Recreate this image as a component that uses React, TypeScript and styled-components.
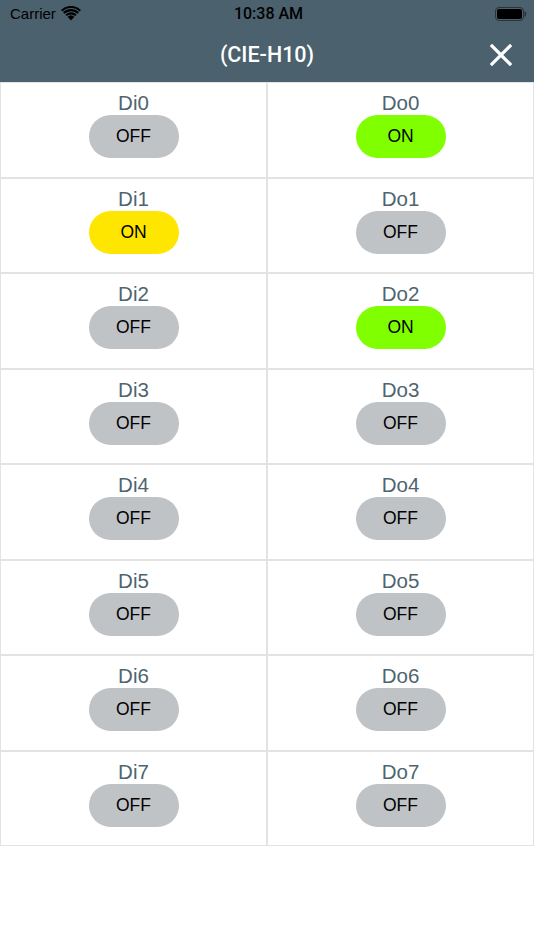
import React from "react";
import styled, { createGlobalStyle } from "styled-components";

const GlobalStyle = createGlobalStyle`
  html, body {
    margin: 0;
    padding: 0;
    background: #ffffff;
    font-family: "Liberation Sans", Arial, sans-serif;
  }
  * {
    box-sizing: border-box;
  }
`;

const Page = styled.div`
  width: 534px;
  min-height: 950px;
  background: #ffffff;
`;

const Header = styled.div`
  background-color: #4b616d;
  color: #ffffff;
`;

const StatusBar = styled.div`
  display: grid;
  grid-template-columns: 1fr auto 1fr;
  align-items: center;
  height: 27px;
  padding: 0 7px 0 10px;
  font-size: 15px;
  color: #000000;
`;

const Carrier = styled.div`
  display: flex;
  align-items: center;
  gap: 5px;
`;

const Clock = styled.div`
  font-family: Roboto, "Liberation Sans", sans-serif;
  font-size: 16px;
  font-weight: 500;
`;

const Battery = styled.div`
  justify-self: end;
  display: flex;
  align-items: center;
`;

const NavBar = styled.div`
  position: relative;
  display: flex;
  align-items: center;
  justify-content: center;
  height: 55px;
`;

const Title = styled.div`
  font-family: Roboto, "Liberation Sans", sans-serif;
  font-size: 21.5px;
  font-weight: 500;
  margin-top: -1px;
`;

const CloseButton = styled.button`
  position: absolute;
  right: 20px;
  top: 15px;
  width: 26px;
  height: 26px;
  padding: 0;
  border: none;
  background: transparent;
  display: flex;
  align-items: center;
  justify-content: center;
`;

const Grid = styled.div`
  display: grid;
  grid-template-columns: 1fr 1fr;
`;

const Cell = styled.div`
  height: 95.5px;
  border: 1px solid #e3e3e3;
  display: flex;
  flex-direction: column;
  align-items: center;
  padding-top: 8px;
`;

const Label = styled.div`
  font-size: 20.5px;
  line-height: 23px;
  color: #4e6570;
`;

const Pill = styled.div<{ $color: string }>`
  margin-top: 1px;
  width: 90px;
  height: 43px;
  border-radius: 22px;
  background-color: ${(p) => p.$color};
  display: flex;
  align-items: center;
  justify-content: center;
  font-size: 17.5px;
  color: #000000;
`;

type Io = { name: string; on: boolean; onColor: string };

const inputs: Io[] = Array.from({ length: 8 }, (_, i) => ({
  name: `Di${i}`,
  on: i === 1,
  onColor: "#ffe600",
}));

const outputs: Io[] = Array.from({ length: 8 }, (_, i) => ({
  name: `Do${i}`,
  on: i === 0 || i === 2,
  onColor: "#80ff00",
}));

const IoCell: React.FC<{ io: Io }> = ({ io }) => (
  <Cell>
    <Label>{io.name}</Label>
    <Pill $color={io.on ? io.onColor : "#c0c3c6"}>{io.on ? "ON" : "OFF"}</Pill>
  </Cell>
);

const App: React.FC = () => (
  <Page>
    <GlobalStyle />
    <Header>
      <StatusBar>
        <Carrier>
          Carrier
          <svg width="20" height="15" viewBox="0 0 20 15">
            <path d="M10 14.5 L6.6 10.8 A5 5 0 0 1 13.4 10.8 Z" fill="#000" />
            <path d="M4.4 8.6 A8 8 0 0 1 15.6 8.6 L14.2 10.1 A6 6 0 0 0 5.8 10.1 Z" fill="#000" />
            <path d="M2.1 6.2 A11.5 11.5 0 0 1 17.9 6.2 L16.5 7.7 A9.5 9.5 0 0 0 3.5 7.7 Z" fill="#000" />
            <path d="M0 3.9 A14.5 14.5 0 0 1 20 3.9 L18.6 5.4 A12.5 12.5 0 0 0 1.4 5.4 Z" fill="#000" />
          </svg>
        </Carrier>
        <Clock>10:38 AM</Clock>
        <Battery>
          <svg width="32" height="14" viewBox="0 0 32 14">
            <rect x="0.5" y="0.5" width="28" height="13" rx="3.5" fill="none" stroke="#2c3338" strokeWidth="1" />
            <rect x="2" y="2" width="25" height="10" rx="2" fill="#000" />
            <rect x="29.5" y="4.5" width="1.6" height="5" rx="0.8" fill="#2c3338" />
          </svg>
        </Battery>
      </StatusBar>
      <NavBar>
        <Title>(CIE-H10)</Title>
        <CloseButton aria-label="close">
          <svg width="22" height="22" viewBox="0 0 22 22">
            <path d="M2 2 L20 20 M20 2 L2 20" stroke="#ffffff" strokeWidth="3.2" strokeLinecap="square" />
          </svg>
        </CloseButton>
      </NavBar>
    </Header>
    <Grid>
      {inputs.map((io, i) => (
        <React.Fragment key={io.name}>
          <IoCell io={io} />
          <IoCell io={outputs[i]} />
        </React.Fragment>
      ))}
    </Grid>
  </Page>
);

export default App;
